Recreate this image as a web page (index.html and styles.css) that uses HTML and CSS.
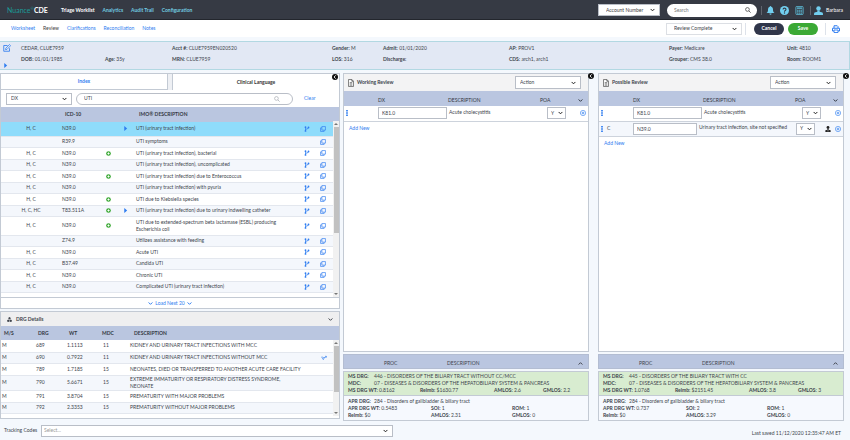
FILE: index.html
```html
<!DOCTYPE html>
<html lang="en">
<head>
    <meta charset="UTF-8">
    <meta name="viewport" content="width=device-width, initial-scale=1.0">
    <title>Nuance CDE - Review</title>
    <link rel="stylesheet" href="styles.css">
</head>
<body>

<!-- Icon set -->
<svg class="sprite" aria-hidden="true">
    <symbol id="i-fork" viewBox="0 0 16 16"><path d="M4 4v9M4 10c0-3 8-1 8-6" fill="none" stroke="currentColor" stroke-width="2"/><circle cx="4" cy="3" r="2.4" fill="currentColor"/><circle cx="4" cy="13" r="2.4" fill="currentColor"/><circle cx="12" cy="4" r="2.4" fill="currentColor"/></symbol>
    <symbol id="i-copy" viewBox="0 0 16 16"><path d="M5 1.5h9.5V11H5zM11 11v3.5H1.500V5H5" fill="none" stroke="currentColor" stroke-width="1.8" stroke-linejoin="round"/></symbol>
    <symbol id="i-plus" viewBox="0 0 16 16"><circle cx="8" cy="8" r="7.500" fill="currentColor"/><path d="M8 4.500v7M4.500 8h7" stroke="#fff" stroke-width="3"/></symbol>
    <symbol id="i-play" viewBox="0 0 8 12"><path d="M1 0l7 6-7 6z" fill="currentColor"/></symbol>
    <symbol id="i-chevron" viewBox="0 0 12 8"><path d="M1.500 1.500L6 6l4.500-4.500" fill="none" stroke="currentColor" stroke-width="2.400"/></symbol>
    <symbol id="i-collapse" viewBox="0 0 16 16"><circle cx="8" cy="8" r="8" fill="currentColor"/><path d="M10 3.500L5.500 8l4.500 4.500" fill="none" stroke="#fff" stroke-width="2.400"/></symbol>
    <symbol id="i-target" viewBox="0 0 16 16"><circle cx="8" cy="8" r="7" fill="none" stroke="currentColor" stroke-width="1.600"/><path d="M8 4.500v7M4.500 8h7" stroke="currentColor" stroke-width="2"/></symbol>
    <symbol id="i-doc" viewBox="0 0 14 18"><path d="M1 1h8l4 4v12H1zM9 1v4h4" fill="#fff" stroke="currentColor" stroke-width="1.800"/><path d="M4 8h6M4 11h6M4 14h6" stroke="currentColor" stroke-width="1.600"/></symbol>
    <symbol id="i-grip" viewBox="0 0 4 14"><path d="M0 0h4v3.500H0zM0 5.300h4v3.500H0zM0 10.500h4V14H0z" fill="currentColor"/></symbol>
    <symbol id="i-person" viewBox="0 0 16 16"><circle cx="8" cy="4.500" r="4" fill="currentColor"/><path d="M6 8h4v2l5 1.500q1 .5 1 4.500H0q0-4 1-4.500L6 10z" fill="currentColor"/></symbol>
    <symbol id="i-agent" viewBox="0 0 16 16"><circle cx="8" cy="4" r="3.800" fill="currentColor"/><path d="M6.500 7h3v3L15 11v5H1v-5l5.500-1z" fill="currentColor"/><path d="M5 13h6" stroke="#fff" stroke-width="1"/></symbol>
    <symbol id="i-bell" viewBox="0 0 16 18"><path d="M8 0q1.500 0 1.500 1.600C12.500 2.500 13 5 13 8c0 3 1 4.500 3 6H0c2-1.500 3-3 3-6 0-3 .5-5.500 3.500-6.400Q6.500 0 8 0zM5.800 15h4.400Q10 17.500 8 17.500T5.800 15z" fill="currentColor"/></symbol>
    <symbol id="i-help" viewBox="0 0 16 16"><circle cx="8" cy="8" r="8" fill="currentColor"/><path d="M5.400 6.300C5.400 3 10.600 3 10.600 6.200 10.600 8 8 8 8 10" fill="none" stroke="#363a44" stroke-width="1.900"/><circle cx="8" cy="12.400" r="1.200" fill="#363a44"/></symbol>
    <symbol id="i-calc" viewBox="0 0 16 18"><rect x=".8" y=".8" width="14.400" height="16.400" rx="2" fill="none" stroke="currentColor" stroke-width="2"/><path d="M3 8.500h10M3 11.500h10M3 14.500h10" stroke="currentColor" stroke-width="2.200" stroke-dasharray="2.800 .8"/><path d="M3 4.300h10" stroke="currentColor" stroke-width="3"/></symbol>
    <symbol id="i-search" viewBox="0 0 16 16"><circle cx="6.500" cy="6.500" r="5" fill="none" stroke="currentColor" stroke-width="1.800"/><path d="M10.300 10.300L15 15" stroke="currentColor" stroke-width="2"/></symbol>
    <symbol id="i-print" viewBox="0 0 16 16"><path d="M4 6V1.500h6.500L12 3v3M4 12H1V6.500h14V12h-3" fill="none" stroke="currentColor" stroke-width="2"/><path d="M4 10h8v5H4z" fill="#fff" stroke="currentColor" stroke-width="1.800"/></symbol>
    <symbol id="i-edit" viewBox="0 0 16 16"><path d="M9 3H1.500v11.500H13V8.500" fill="none" stroke="currentColor" stroke-width="1.700"/><path d="M5.500 8.500L13 1l2.300 2.300L8 10.700l-3 .5z" fill="none" stroke="currentColor" stroke-width="1.500"/></symbol>
    <symbol id="i-cubes" viewBox="0 0 16 16"><path d="M8 0l3.500 2v4L8 8 4.500 6V2zM4 8l3.500 2v4L4 16 .5 14v-4zM12 8l3.500 2v4L12 16l-3.500-2v-4z" fill="currentColor"/></symbol>
    <symbol id="i-link" viewBox="0 0 18 14"><path d="M1 3l3 4 3 5 4-8M5 3l3 4M11 7l5-5M12 2h4v4" fill="none" stroke="currentColor" stroke-width="2"/></symbol>
</svg>

<header class="topbar">
    <a href="#" class="logo"><span>Nuance<sup>®</sup></span><b>CDE</b></a>
    <nav class="topnav">
        <a href="#" class="active">Triage Worklist</a>
        <a href="#">Analytics</a>
        <a href="#">Audit Trail</a>
        <a href="#">Configuration</a>
    </nav>
    <select class="select account" aria-label="Search by"><option>Account Number</option></select>
    <div class="search">
        <input type="text" placeholder="Search" aria-label="Search">
        <svg class="icon sm"><use href="#i-search"/></svg>
    </div>
    <div class="tools">
        <button class="icon-btn" aria-label="Notifications"><svg class="icon lg"><use href="#i-bell"/></svg></button>
        <button class="icon-btn" aria-label="Help"><svg class="icon lg"><use href="#i-help"/></svg></button>
        <button class="icon-btn calc" aria-label="Calculator"><svg class="icon lg"><use href="#i-calc"/></svg></button>
    </div>
    <button class="user"><svg class="icon lg"><use href="#i-person"/></svg>Barbara</button>
</header>

<div class="subbar">
    <nav class="subnav">
        <a href="#">Worksheet</a>
        <a href="#" class="active">Review</a>
        <a href="#">Clarifications</a>
        <a href="#">Reconciliation</a>
        <a href="#">Notes</a>
    </nav>
    <select class="select status" aria-label="Status"><option>Review Complete</option></select>
    <div class="actions">
        <button class="btn cancel">Cancel</button>
        <button class="btn save">Save</button>
    </div>
    <button class="icon-btn print" aria-label="Print"><svg class="icon md"><use href="#i-print"/></svg></button>
</div>

<section class="patient">
    <div class="patient-tools">
        <button class="icon-btn" aria-label="Edit"><svg class="icon md"><use href="#i-edit"/></svg></button>
        <button class="icon-btn" aria-label="Expand"><svg class="icon xs"><use href="#i-play"/></svg></button>
    </div>
    <div class="patient-grid">
        <span>CEDAR, CLUE7959</span>
        <span></span>
        <span><b>Acct #:</b> CLUE7959EN020520</span>
        <span><b>Gender:</b> M</span>
        <span><b>Admit:</b> 01/01/2020</span>
        <span><b>AP:</b> PROV1</span>
        <span><b>Payer:</b> Medicare</span>
        <span><b>Unit:</b> 4810</span>
        <span><b>DOB:</b> 01/01/1985</span>
        <span><b>Age:</b> 35y</span>
        <span><b>MRN:</b> CLUE7959</span>
        <span><b>LOS:</b> 316</span>
        <span><b>Discharge:</b></span>
        <span><b>CDS:</b> arch1, arch1</span>
        <span><b>Grouper:</b> CMS 38.0</span>
        <span><b>Room:</b> ROOM1</span>
    </div>
</section>

<main class="columns">
    <div class="lookup">
        <section class="box">
            <div class="tabs">
                <button class="tab">Index</button>
                <button class="tab active">Clinical Language</button>
            </div>
            <div class="finder">
                <select class="select kind" aria-label="Code type"><option>DX</option></select>
                <div class="term">
                    <input type="text" value="UTI" aria-label="Search term">
                    <svg class="icon sm"><use href="#i-search"/></svg>
                </div>
                <a href="#">Clear</a>
            </div>
            <div class="scroller codes-scroller">
                <table class="codes">
                    <colgroup><col class="w-flag"><col class="w-code"><col class="w-plus"><col class="w-play"><col><col class="w-act"><col class="w-act"><col class="w-bar"></colgroup>
                    <thead>
                        <tr><th></th><th>ICD-10</th><th></th><th></th><th>IMO® DESCRIPTION</th><th></th><th></th><th></th></tr>
                    </thead>
                    <tbody>
                        <tr class="selected"><td>H, C</td><td>N39.0</td><td></td><td><svg class="icon xs"><use href="#i-play"/></svg></td><td>UTI (urinary tract infection)</td><td><svg class="icon sm"><use href="#i-fork"/></svg></td><td><svg class="icon sm"><use href="#i-copy"/></svg></td><td></td></tr>
                        <tr><td></td><td>R39.9</td><td></td><td></td><td>UTI symptoms</td><td></td><td><svg class="icon sm"><use href="#i-copy"/></svg></td><td></td></tr>
                        <tr><td>H, C</td><td>N39.0</td><td><svg class="icon xs"><use href="#i-plus"/></svg></td><td></td><td>UTI (urinary tract infection), bacterial</td><td><svg class="icon sm"><use href="#i-fork"/></svg></td><td><svg class="icon sm"><use href="#i-copy"/></svg></td><td></td></tr>
                        <tr><td>H, C</td><td>N39.0</td><td></td><td></td><td>UTI (urinary tract infection), uncomplicated</td><td><svg class="icon sm"><use href="#i-fork"/></svg></td><td><svg class="icon sm"><use href="#i-copy"/></svg></td><td></td></tr>
                        <tr><td>H, C</td><td>N39.0</td><td><svg class="icon xs"><use href="#i-plus"/></svg></td><td></td><td>UTI (urinary tract infection) due to Enterococcus</td><td><svg class="icon sm"><use href="#i-fork"/></svg></td><td><svg class="icon sm"><use href="#i-copy"/></svg></td><td></td></tr>
                        <tr><td>H, C</td><td>N39.0</td><td></td><td></td><td>UTI (urinary tract infection) with pyuria</td><td><svg class="icon sm"><use href="#i-fork"/></svg></td><td><svg class="icon sm"><use href="#i-copy"/></svg></td><td></td></tr>
                        <tr><td>H, C</td><td>N39.0</td><td><svg class="icon xs"><use href="#i-plus"/></svg></td><td></td><td>UTI due to Klebsiella species</td><td><svg class="icon sm"><use href="#i-fork"/></svg></td><td><svg class="icon sm"><use href="#i-copy"/></svg></td><td></td></tr>
                        <tr><td>H, C, HC</td><td>T83.511A</td><td><svg class="icon xs"><use href="#i-plus"/></svg></td><td><svg class="icon xs"><use href="#i-play"/></svg></td><td>UTI (urinary tract infection) due to urinary indwelling catheter</td><td><svg class="icon sm"><use href="#i-fork"/></svg></td><td><svg class="icon sm"><use href="#i-copy"/></svg></td><td></td></tr>
                        <tr class="tall"><td>H, C</td><td>N39.0</td><td><svg class="icon xs"><use href="#i-plus"/></svg></td><td></td><td>UTI due to extended-spectrum beta lactamase (ESBL) producing Escherichia coli</td><td><svg class="icon sm"><use href="#i-fork"/></svg></td><td><svg class="icon sm"><use href="#i-copy"/></svg></td><td></td></tr>
                        <tr><td></td><td>Z74.9</td><td></td><td></td><td>Utilizes assistance with feeding</td><td><svg class="icon sm"><use href="#i-fork"/></svg></td><td><svg class="icon sm"><use href="#i-copy"/></svg></td><td></td></tr>
                        <tr><td>H, C</td><td>N39.0</td><td></td><td></td><td>Acute UTI</td><td><svg class="icon sm"><use href="#i-fork"/></svg></td><td><svg class="icon sm"><use href="#i-copy"/></svg></td><td></td></tr>
                        <tr><td>H, C</td><td>B37.49</td><td></td><td></td><td>Candida UTI</td><td><svg class="icon sm"><use href="#i-fork"/></svg></td><td><svg class="icon sm"><use href="#i-copy"/></svg></td><td></td></tr>
                        <tr><td>H, C</td><td>N39.0</td><td></td><td></td><td>Chronic UTI</td><td><svg class="icon sm"><use href="#i-fork"/></svg></td><td><svg class="icon sm"><use href="#i-copy"/></svg></td><td></td></tr>
                        <tr><td>H, C</td><td>N39.0</td><td></td><td></td><td>Complicated UTI (urinary tract infection)</td><td><svg class="icon sm"><use href="#i-fork"/></svg></td><td><svg class="icon sm"><use href="#i-copy"/></svg></td><td></td></tr>
                    </tbody>
                </table>
                <div class="scrollbar"><i></i></div>
            </div>
            <button class="load-more"><svg class="icon xs"><use href="#i-chevron"/></svg>Load Next 20<svg class="icon xs"><use href="#i-chevron"/></svg></button>
            <button class="collapse inside" aria-label="Collapse"><svg class="icon sm"><use href="#i-collapse"/></svg></button>
        </section>

        <section class="box drg">
            <h2 class="drg-title"><svg class="icon xs"><use href="#i-cubes"/></svg>DRG Details<svg class="icon xs end"><use href="#i-chevron"/></svg></h2>
            <div class="scroller drg-scroller">
                <table class="drgs">
                    <colgroup><col class="w-ms"><col class="w-drg"><col class="w-wt"><col class="w-mdc"><col><col class="w-act"><col class="w-bar"></colgroup>
                    <thead>
                        <tr><th>M/S</th><th>DRG</th><th>WT</th><th>MDC</th><th>DESCRIPTION</th><th></th><th></th></tr>
                    </thead>
                    <tbody>
                        <tr><td>M</td><td>689</td><td>1.1113</td><td>11</td><td>KIDNEY AND URINARY TRACT INFECTIONS WITH MCC</td><td></td><td></td></tr>
                        <tr><td>M</td><td>690</td><td>0.7922</td><td>11</td><td>KIDNEY AND URINARY TRACT INFECTIONS WITHOUT MCC</td><td><svg class="icon sm"><use href="#i-link"/></svg></td><td></td></tr>
                        <tr><td>M</td><td>789</td><td>1.7185</td><td>15</td><td>NEONATES, DIED OR TRANSFERRED TO ANOTHER ACUTE CARE FACILITY</td><td></td><td></td></tr>
                        <tr class="tall"><td>M</td><td>790</td><td>5.6671</td><td>15</td><td>EXTREME IMMATURITY OR RESPIRATORY DISTRESS SYNDROME,<br>NEONATE</td><td></td><td></td></tr>
                        <tr><td>M</td><td>791</td><td>3.8704</td><td>15</td><td>PREMATURITY WITH MAJOR PROBLEMS</td><td></td><td></td></tr>
                        <tr><td>M</td><td>792</td><td>2.3353</td><td>15</td><td>PREMATURITY WITHOUT MAJOR PROBLEMS</td><td></td><td></td></tr>
                    </tbody>
                </table>
                <div class="scrollbar"><i></i></div>
            </div>
        </section>
    </div>

    <div class="review">
        <section class="box codeset">
            <div class="review-head">
                <svg class="icon doc"><use href="#i-doc"/></svg>
                <h2>Working Review</h2>
                <select class="select action" aria-label="Working review action"><option>Action</option></select>
            </div>
            <table class="dx">
                <colgroup><col class="w-grip"><col class="w-c"><col class="w-dx"><col><col class="w-poa"><col class="w-agent"><col class="w-target"></colgroup>
                <thead>
                    <tr><th></th><th></th><th>DX</th><th>DESCRIPTION</th><th>POA</th><th></th><th><svg class="icon xs"><use href="#i-chevron"/></svg></th></tr>
                </thead>
                <tbody>
                    <tr><td><svg class="icon grip"><use href="#i-grip"/></svg></td><td></td><td><input type="text" value="K81.0" aria-label="DX code"></td><td>Acute cholecystitis</td><td><select class="select poa" aria-label="POA"><option>Y</option></select></td><td></td><td><svg class="icon sm"><use href="#i-target"/></svg></td></tr>
                </tbody>
            </table>
            <a href="#" class="add">Add New</a>
        </section>
        <div class="proc"><span>PROC</span><span>DESCRIPTION</span><svg class="icon xs up"><use href="#i-chevron"/></svg></div>
        <section class="box totals">
            <div class="ms">
                <p class="pair"><b>MS DRG:</b><span>446 - DISORDERS OF THE BILIARY TRACT WITHOUT CC/MCC</span></p>
                <p class="pair"><b>MDC:</b><span>07 - DISEASES &amp; DISORDERS OF THE HEPATOBILIARY SYSTEM &amp; PANCREAS</span></p>
                <p class="four"><span><b>MS DRG WT:</b> 0.8162</span><span><b>Reimb:</b> $1630.77</span><span><b>AMLOS:</b> 2.6</span><span><b>GMLOS:</b> 2.2</span></p>
            </div>
            <div class="apr">
                <p class="pair"><b>APR DRG:</b><span>284 - Disorders of gallbladder &amp; biliary tract</span></p>
                <p class="three"><span><b>APR DRG WT:</b> 0.5483</span><span><b>SOI:</b> 1</span><span><b>ROM:</b> 1</span></p>
                <p class="three"><span><b>Reimb:</b> $0</span><span><b>AMLOS:</b> 2.31</span><span><b>GMLOS:</b> 0</span></p>
            </div>
        </section>
        <button class="collapse" aria-label="Collapse"><svg class="icon sm"><use href="#i-collapse"/></svg></button>
    </div>

    <div class="review">
        <section class="box codeset">
            <div class="review-head">
                <svg class="icon doc"><use href="#i-doc"/></svg>
                <h2>Possible Review</h2>
                <select class="select action" aria-label="Possible review action"><option>Action</option></select>
            </div>
            <table class="dx">
                <colgroup><col class="w-grip"><col class="w-c"><col class="w-dx"><col><col class="w-poa"><col class="w-agent"><col class="w-target"></colgroup>
                <thead>
                    <tr><th></th><th></th><th>DX</th><th>DESCRIPTION</th><th>POA</th><th></th><th><svg class="icon xs"><use href="#i-chevron"/></svg></th></tr>
                </thead>
                <tbody>
                    <tr><td><svg class="icon grip"><use href="#i-grip"/></svg></td><td></td><td><input type="text" value="K81.0" aria-label="DX code"></td><td>Acute cholecystitis</td><td><select class="select poa" aria-label="POA"><option>Y</option></select></td><td></td><td><svg class="icon sm"><use href="#i-target"/></svg></td></tr>
                    <tr class="suggested"><td><svg class="icon grip"><use href="#i-grip"/></svg></td><td>C</td><td><input type="text" value="N39.0" aria-label="DX code"></td><td>Urinary tract infection, site not specified</td><td><select class="select poa" aria-label="POA"><option>Y</option></select></td><td><svg class="icon sm"><use href="#i-agent"/></svg></td><td><svg class="icon sm"><use href="#i-target"/></svg></td></tr>
                </tbody>
            </table>
            <a href="#" class="add">Add New</a>
        </section>
        <div class="proc"><span>PROC</span><span>DESCRIPTION</span><svg class="icon xs up"><use href="#i-chevron"/></svg></div>
        <section class="box totals">
            <div class="ms">
                <p class="pair"><b>MS DRG:</b><span>445 - DISORDERS OF THE BILIARY TRACT WITH CC</span></p>
                <p class="pair"><b>MDC:</b><span>07 - DISEASES &amp; DISORDERS OF THE HEPATOBILIARY SYSTEM &amp; PANCREAS</span></p>
                <p class="four"><span><b>MS DRG WT:</b> 1.0768</span><span><b>Reimb:</b> $2151.45</span><span><b>AMLOS:</b> 3.8</span><span><b>GMLOS:</b> 3</span></p>
            </div>
            <div class="apr">
                <p class="pair"><b>APR DRG:</b><span>284 - Disorders of gallbladder &amp; biliary tract</span></p>
                <p class="three"><span><b>APR DRG WT:</b> 0.737</span><span><b>SOI:</b> 2</span><span><b>ROM:</b> 1</span></p>
                <p class="three"><span><b>Reimb:</b> $0</span><span><b>AMLOS:</b> 3.29</span><span><b>GMLOS:</b> 0</span></p>
            </div>
        </section>
        <button class="collapse" aria-label="Collapse"><svg class="icon sm"><use href="#i-collapse"/></svg></button>
    </div>
</main>

<footer class="footer">
    <label for="tracking">Tracking Codes</label>
    <select id="tracking" class="select"><option>Select...</option></select>
    <span class="saved">Last saved 11/12/2020 12:35:47 AM ET</span>
</footer>

</body>
</html>
```
FILE: styles.css
```css
* {
    box-sizing: border-box;
}

body {
    margin: 0;
    min-height: 100vh;
    display: flex;
    flex-direction: column;
    background-color: #f4f8fd;
    color: #40454d;
    font-family: Lato, sans-serif;
    font-size: 5px;
    line-height: 7px;
}

a {
    color: #2f7df0;
    text-decoration: none;
}

b {
    font-weight: bold;
}

h2, p {
    margin: 0;
    font-size: 5px;
}

button, input, select {
    font: inherit;
    color: inherit;
    margin: 0;
}

button {
    border: none;
    padding: 0;
    background: none;
    cursor: pointer;
}

/* Icons */
.sprite {
    display: none;
}

.icon {
    display: block;
    flex: none;
    width: 6px;
    height: 6px;
}

.icon.xs {
    width: 5px;
    height: 5px;
}

.icon.md {
    width: 8px;
    height: 8px;
}

.icon.lg {
    width: 9px;
    height: 9px;
}

.icon.doc {
    width: 6px;
    height: 8px;
    color: #555;
}

.icon.grip {
    width: 2px;
    height: 6px;
}

.icon.up {
    transform: rotate(180deg);
}

/* Form controls */
.select {
    appearance: none;
    height: 12px;
    padding: 0 12px 0 7px;
    border: 1px solid #b9bec7;
    border-radius: 0;
    background: #fff url("data:image/svg+xml,%3Csvg xmlns='http://www.w3.org/2000/svg' viewBox='0 0 12 8'%3E%3Cpath d='M1.500 1.500L6 6l4.500-4.500' fill='none' stroke='%23222' stroke-width='2.400'/%3E%3C/svg%3E") no-repeat right 4px center / 5px 4px;
}

/* Top bar */
.topbar {
    display: flex;
    align-items: center;
    height: 20px;
    padding: 1px 7px 0;
    background-color: #363a44;
    border-bottom: 1px solid #23262d;
    color: #fff;
}

.logo {
    display: flex;
    width: 54px;
    font-size: 7px;
    line-height: 10px;
    color: #fff;
}

.logo span {
    color: #1b9a97;
}

.logo sup {
    font-size: 4px;
    line-height: 4px;
}

.topnav {
    display: flex;
    flex: 1;
    gap: 8px;
    font-weight: bold;
}

.topnav a {
    color: #72cce0;
}

.topnav .active {
    color: #fff;
}

.account {
    width: 62px;
    color: #444;
}

.search {
    display: flex;
    align-items: center;
    width: 90px;
    height: 13px;
    margin-left: 7px;
    padding: 0 6px 0 7px;
    border-radius: 7px;
    background-color: #fff;
    color: #333;
}

.search input, .term input {
    flex: 1;
    min-width: 0;
    padding: 0;
    border: none;
    background: none;
    outline: none;
}

.tools {
    display: flex;
    gap: 5px;
    margin-left: 4px;
    padding: 0 6px 0 4px;
    border-left: 1px solid #60656f;
    border-right: 1px solid #60656f;
    color: #72cff0;
}

.tools .calc {
    padding-left: 1px;
    color: #58abc4;
}

.user {
    display: flex;
    align-items: center;
    gap: 3px;
    margin-left: 3px;
    color: #fff;
}

.user .icon {
    color: #72cff0;
}

/* Sub navigation */
.subbar {
    display: flex;
    align-items: center;
    height: 17px;
    padding: 0 10px 0 11px;
    background-color: #fff;
}

.subnav {
    display: flex;
    flex: 1;
    gap: 8px;
}

.subnav .active {
    color: #444;
}

.status {
    width: 76px;
    border-color: #dcdfe4;
}

.actions {
    display: flex;
    gap: 4px;
    margin: 0 3px;
    padding: 0 7px 0 8px;
    border-left: 1px solid #dde2ea;
    border-right: 1px solid #dde2ea;
}

.btn {
    width: 30px;
    height: 12px;
    border-radius: 6px;
    color: #fff;
    font-weight: bold;
}

.cancel {
    background-color: #30364a;
}

.save {
    background-color: #3ba935;
}

.print {
    margin-left: 3px;
    color: #2f7df0;
}

/* Patient banner */
.patient {
    display: flex;
    height: 29px;
    margin-top: 4px;
    border: 1px solid #b2d8e2;
    border-left: none;
    background-color: #e2e8f4;
}

.patient-tools {
    display: flex;
    flex-direction: column;
    justify-content: space-between;
    width: 21px;
    padding: 2px 3px 1px;
    color: #2f7df0;
}

.patient-grid {
    display: grid;
    flex: 1;
    grid-template-columns: 84fr 67fr 160fr 51fr 126fr 160fr 118fr 62fr;
    grid-auto-rows: 11px;
    padding-top: 3px;
    white-space: nowrap;
}

.patient-grid span {
    min-width: 0;
}

/* Main columns */
.columns {
    display: flex;
    flex: 1;
    padding: 3px 6px 0 0;
}

.box {
    position: relative;
    border: 1px solid #c3cad4;
    background-color: #fff;
}

.lookup {
    display: flex;
    flex: 340 1 0;
    flex-direction: column;
    gap: 2px;
    min-width: 0;
    margin: 0 3px 2px 0;
}

.tabs {
    display: flex;
    gap: 4px;
    height: 16px;
    background-color: #eef0f4;
}

.tab {
    flex: 1;
    border-right: 1px solid #c3cad4;
    border-bottom: 1px solid #c3cad4;
    background-color: #fff;
    color: #2f7df0;
    font-weight: bold;
}

.tab.active {
    border-right: none;
    border-bottom: none;
    border-left: 1px solid #c3cad4;
    color: #333;
}

.finder {
    display: flex;
    align-items: center;
    height: 17px;
    padding-left: 5px;
}

.kind {
    width: 66px;
    padding-left: 4px;
}

.term {
    display: flex;
    align-items: center;
    width: 217px;
    height: 12px;
    margin: 0 11px 0 4px;
    padding: 0 12px 0 7px;
    border: 1px solid #b9bec7;
    border-radius: 6px;
}

.term .icon {
    color: #a5aab2;
}

.scroller {
    position: relative;
    overflow: hidden;
}

table {
    width: 100%;
    border-collapse: collapse;
    table-layout: fixed;
}

th, td {
    padding: 0;
    text-align: left;
}

thead th {
    height: 14px;
    background-color: #bac6e0;
    color: #333842;
}

tbody tr {
    height: 12px;
    border-bottom: 1px solid #e3e7ee;
}

tbody tr:nth-child(even) {
    background-color: #f4f7fc;
}

td .icon {
    color: #2f7df0;
}

td .icon, th .icon {
    margin: 0 auto;
}

.w-flag { width: 60px; }
.w-code { width: 40px; }
.w-plus { width: 15px; }
.w-play { width: 19px; }
.w-act { width: 16px; }
.w-bar { width: 8px; }

.codes-scroller {
    height: 190px;
}

.codes th {
    height: 15px;
}

.codes th:nth-child(2) {
    padding-left: 4px;
}

.codes th:nth-child(5) {
    padding-left: 4px;
}

.codes td:first-child {
    text-align: center;
}

.codes td:nth-child(2), .codes td:nth-child(5) {
    padding-left: 1px;
}

.codes td:nth-child(5) {
    padding-right: 10px;
}

.codes td:nth-child(3) .icon {
    color: #3ba935;
}

.codes tbody tr:nth-child(even) {
    height: 11px;
}

.codes tbody .selected {
    height: 14px;
    background-color: #8fdcfb;
}

.codes tbody .tall {
    height: 19px;
}

.scrollbar {
    position: absolute;
    top: 14px;
    right: 0;
    bottom: 0;
    display: flex;
    flex-direction: column;
    align-items: center;
    justify-content: space-between;
    width: 6px;
    background-color: #f1f1f1;
}

.scrollbar::before, .scrollbar::after {
    content: "";
    margin: 2px 0;
    border: 2px solid transparent;
    border-top: none;
    border-bottom: 2px solid #777;
}

.scrollbar::after {
    transform: rotate(180deg);
}

.scrollbar i {
    width: 5px;
    height: 60%;
    margin-bottom: auto;
    background-color: #c1c1c1;
}

.load-more {
    display: flex;
    align-items: center;
    justify-content: center;
    gap: 2px;
    width: 100%;
    height: 11px;
    border-top: 1px solid #c3cad4;
    color: #2f7df0;
}

.collapse {
    position: absolute;
    top: 0;
    right: -5px;
    color: #111;
}

.collapse.inside {
    right: 1px;
}

.drg {
    flex: 1;
}

.drg-title {
    display: flex;
    align-items: center;
    gap: 4px;
    height: 14px;
    padding: 0 6px;
    background-color: #efeff0;
}

.drg-title .end {
    margin-left: auto;
}

.drg-scroller {
    height: 90px;
}

.w-ms { width: 34px; }
.w-drg { width: 31px; }
.w-wt { width: 36px; }
.w-mdc { width: 27px; }

.drgs th, .drgs td {
    padding-left: 1px;
}

.drgs th:first-child {
    padding-left: 3px;
}

.drgs th:nth-child(2), .drgs th:nth-child(3) {
    padding-left: 3px;
}

.drgs th:nth-child(4) {
    padding-left: 0;
}

.drgs th:nth-child(5) {
    padding-left: 5px;
}

.drgs tbody tr:nth-child(even) {
    height: 11px;
}

.drgs tbody .tall {
    height: 19px;
}

/* Review panels */
.review {
    position: relative;
    display: flex;
    flex: 246 1 0;
    flex-direction: column;
    gap: 2px;
    min-width: 0;
}

.review + .review {
    margin-left: 9px;
}

.codeset {
    flex: 1;
}

.review-head {
    display: flex;
    align-items: center;
    gap: 3px;
    height: 17px;
    padding: 0 7px 0 4px;
    background-color: #f3f3f4;
}

.action {
    width: 66px;
    height: 13px;
    margin-left: auto;
    padding-left: 4px;
}

.w-grip { width: 5px; }
.w-c { width: 29px; }
.w-dx { width: 65px; }
.w-poa { width: 27px; }
.w-agent { width: 11px; }
.w-target { width: 10px; }

.dx thead th {
    height: 15px;
    padding-top: 3px;
    font-weight: normal;
}

.dx th:last-child .icon {
    margin-left: 0;
}

.dx th:nth-child(4) {
    padding-left: 5px;
}

.dx tbody tr {
    height: 15px;
    border-bottom-color: #cdd3dc;
}

.dx td:nth-child(2) {
    padding-left: 3px;
}

.dx input {
    display: block;
    width: 69px;
    height: 12px;
    padding: 0 3px;
    border: 1px solid #b9bec7;
}

.dx td:nth-child(4) {
    padding: 0 0 2px 6px;
    white-space: nowrap;
}

.dx td:nth-child(5) {
    padding-left: 7px;
}

.dx .suggested input {
    width: 64px;
}

.dx .suggested td:nth-child(4), .dx .suggested td:nth-child(5) {
    padding-left: 1px;
}

.dx td:nth-child(6) .icon {
    color: #222;
}

.poa {
    display: block;
    width: 19px;
    height: 12px;
    padding: 0 0 0 3px;
    background-position: right 2px center;
}

.add {
    display: inline-block;
    padding: 3px 5px;
}

.proc {
    display: flex;
    align-items: center;
    height: 15px;
    padding: 3px 5px 0 40px;
    background-color: #bac6e0;
    border: 1px solid #b3bdd2;
}

.proc span:first-child {
    width: 63px;
}

.proc .icon {
    margin-left: auto;
}

.totals p {
    display: grid;
    white-space: nowrap;
}

.totals span {
    min-width: 0;
}

.ms {
    padding: 1px 4px;
    border-bottom: 1px solid #c3cad4;
    background-color: #d8ecd0;
}

.apr {
    padding: 2px 4px 1px;
    background-color: #f6f9fe;
}

.pair {
    grid-template-columns: 26px 1fr;
}

.four {
    grid-template-columns: 72fr 74fr 49fr 41fr;
}

.three {
    grid-template-columns: 83fr 81fr 72fr;
}

/* Footer */
.footer {
    display: flex;
    align-items: center;
    height: 19px;
    padding: 0 9px 0 4px;
}

.footer label {
    width: 37px;
    white-space: nowrap;
}

.footer .select {
    width: 42%;
    padding-left: 2px;
    color: #999;
}

.saved {
    margin-left: auto;
    padding-top: 6px;
}
```
